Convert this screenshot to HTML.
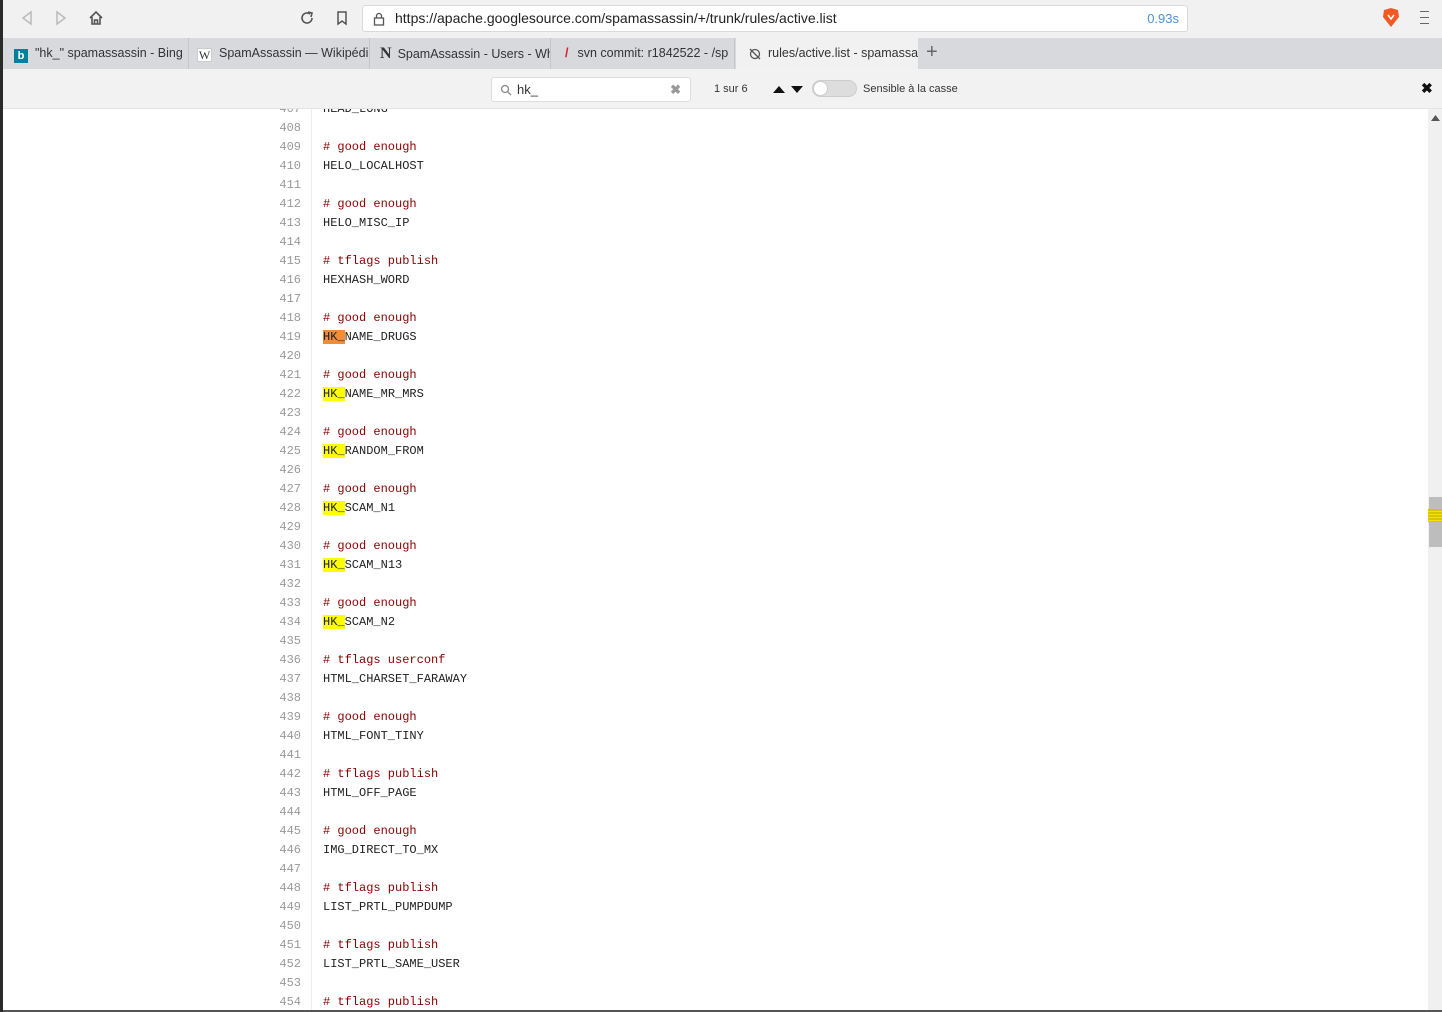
<!DOCTYPE html>
<html><head><meta charset="utf-8">
<style>
*{margin:0;padding:0;box-sizing:border-box}
body{width:1442px;height:1012px;overflow:hidden;background:#fff;font-family:"Liberation Sans",sans-serif;position:relative}
.abs{position:absolute}
#toolbar{left:0;top:0;width:1442px;height:38px;background:#f1f1f1}
#url{left:362px;top:5px;width:826px;height:27px;background:#fff;border:1px solid #d9d9d9;border-radius:3px;font-size:14px;color:#222;line-height:25px;padding-left:32px}
#tabs{left:0;top:38px;width:1442px;height:31px;background:#d7d9dc}
.tab{position:absolute;top:0;height:31px;font-size:12.5px;color:#333;line-height:31px;white-space:nowrap;overflow:hidden;border-right:1px solid #c4c6c9}
#find{left:0;top:69px;width:1442px;height:40px;background:#f2f2f2;border-bottom:1px solid #e4e4e4}
#code{left:4px;top:109px;width:1424px;height:901px;overflow:hidden;background:#fff}
#lines{position:absolute;left:0;top:-9px;width:1424px;font-family:"Liberation Mono",monospace;font-size:12px}
.l{height:19px;line-height:19px;position:relative;white-space:pre;width:1424px}
.n{position:absolute;left:237px;width:60px;text-align:right;color:#999;top:0}
.t{position:absolute;left:319px;color:#222}
.c{color:#880000}
.y{background:#ffff00}
.o{background:#f28c38}
#gutter{left:311px;top:109px;width:1px;height:901px;background:#eee}
#sb{left:1428px;top:109px;width:14px;height:901px;background:#f0f0f0}
</style></head><body>
<div class="abs" style="left:0;top:0;width:3px;height:1012px;background:#2a2a2a;z-index:5"></div>
<div id="toolbar" class="abs">
<svg class="abs" style="left:20px;top:10px" width="14" height="16"><path d="M11 2 L3 8 L11 14 Z" fill="none" stroke="#bbb" stroke-width="1.5"/></svg>
<svg class="abs" style="left:54px;top:10px" width="14" height="16"><path d="M3 2 L11 8 L3 14 Z" fill="none" stroke="#bbb" stroke-width="1.5"/></svg>
<svg class="abs" style="left:88px;top:10px" width="16" height="16"><path d="M2 8 L8 2 L14 8 M4 7 V14 H12 V7 M6.5 14 V10 H9.5 V14" fill="none" stroke="#555" stroke-width="1.6"/></svg>
<svg class="abs" style="left:299px;top:10px" width="16" height="16"><path d="M13 8 A5 5 0 1 1 11 4" fill="none" stroke="#555" stroke-width="1.6"/><path d="M9 2 L13 3 L12 7" fill="none" stroke="#555" stroke-width="1.6"/></svg>
<svg class="abs" style="left:335px;top:10px" width="14" height="16"><path d="M3 2 H11 V14 L7 11 L3 14 Z" fill="none" stroke="#555" stroke-width="1.5"/></svg>
<div id="url" class="abs">https://apache.googlesource.com/spamassassin/+/trunk/rules/active.list<span style="position:absolute;right:8px;color:#4a90d9;font-size:13px">0.93s</span>
<svg style="position:absolute;left:10px;top:6px" width="12" height="14"><rect x="1.5" y="6" width="9" height="7" fill="none" stroke="#555" stroke-width="1.3"/><path d="M3.5 6 V4 A2.5 2.5 0 0 1 8.5 4 V6" fill="none" stroke="#555" stroke-width="1.3"/></svg></div>
<svg class="abs" style="left:1381px;top:7px" width="20" height="22"><path d="M3 3 L10 1 L17 3 L18 10 L10 20 L2 10 Z" fill="#f15a24"/><path d="M7 8 L10 12 L13 8" fill="none" stroke="#fff" stroke-width="1.5"/></svg>
<div class="abs" style="left:1420px;top:11px;width:9px;height:13px;border-top:1.5px solid #666;border-bottom:1.5px solid #666"><div style="margin-top:4.5px;border-top:1.5px solid #666"></div></div>
</div>
<div id="tabs" class="abs">
<div class="tab" style="left:8px;width:181px;padding-left:6px"><span style="display:inline-block;width:14px;height:14px;background:#00809d;color:#fff;font-size:11px;line-height:14px;text-align:center;font-weight:bold;vertical-align:-2px;margin-right:7px">b</span>"hk_" spamassassin - Bing</div>
<div class="tab" style="left:189px;width:181px;padding-left:8px"><span style="display:inline-block;width:15px;height:14px;background:#fff;border:1px solid #ccc;font-family:'Liberation Serif',serif;font-size:12px;line-height:12px;text-align:center;vertical-align:-2px;margin-right:7px">W</span>SpamAssassin — Wikipédia</div>
<div class="tab" style="left:370px;width:181px;padding-left:10px"><span style="font-family:'Liberation Serif',serif;font-weight:bold;font-size:16px;margin-right:6px">N</span>SpamAssassin - Users - Wh</div>
<div class="tab" style="left:551px;width:184px;padding-left:14px"><span style="color:#d0202a;font-weight:bold;margin-right:9px">/</span>svn commit: r1842522 - /sp</div>
<div class="tab" style="left:736px;width:182px;background:#f1f1f1;padding-left:32px;height:31px;border:none">rules/active.list - spamassa
<svg style="position:absolute;left:12px;top:9px" width="14" height="14"><circle cx="7" cy="7" r="4.5" fill="none" stroke="#555" stroke-width="1.3"/><path d="M2 2 L12 12" stroke="#555" stroke-width="1.3"/></svg></div>
<div class="abs" style="left:926px;top:3px;font-size:20px;color:#666">+</div>
</div>
<div id="find" class="abs">
<div class="abs" style="left:491px;top:8px;width:200px;height:25px;background:#fff;border:1px solid #ddd;border-radius:3px;font-size:13px;line-height:23px;padding-left:25px;color:#333">hk_
<svg style="position:absolute;left:8px;top:6px" width="12" height="12"><circle cx="5" cy="5" r="3.5" fill="none" stroke="#888" stroke-width="1.3"/><path d="M7.5 7.5 L11 11" stroke="#888" stroke-width="1.3"/></svg>
<span style="position:absolute;right:9px;top:0;color:#999;font-weight:bold">✖</span></div>
<div class="abs" style="left:714px;top:14px;font-size:11px;color:#333">1 sur 6</div>
<svg class="abs" style="left:772px;top:15px" width="34" height="10"><path d="M1 9 L7 2 L13 9 Z M19 2 L31 2 L25 9 Z" fill="#111"/></svg>
<div class="abs" style="left:812px;top:11px;width:45px;height:17px;background:#ddd;border:1px solid #ccc;border-radius:9px"><div style="width:15px;height:15px;background:#fff;border-radius:50%;border:1px solid #ccc"></div></div>
<div class="abs" style="left:863px;top:14px;font-size:11px;color:#333">Sensible à la casse</div>
<div class="abs" style="left:1421px;top:11px;font-size:14px;font-weight:bold;color:#111">✖</div>
</div>
<div id="code" class="abs"><div id="lines">
<div class="l"><span class="n">407</span><span class="t">HEAD_LONG</span></div>
<div class="l"><span class="n">408</span></div>
<div class="l"><span class="n">409</span><span class="t c"># good enough</span></div>
<div class="l"><span class="n">410</span><span class="t">HELO_LOCALHOST</span></div>
<div class="l"><span class="n">411</span></div>
<div class="l"><span class="n">412</span><span class="t c"># good enough</span></div>
<div class="l"><span class="n">413</span><span class="t">HELO_MISC_IP</span></div>
<div class="l"><span class="n">414</span></div>
<div class="l"><span class="n">415</span><span class="t c"># tflags publish</span></div>
<div class="l"><span class="n">416</span><span class="t">HEXHASH_WORD</span></div>
<div class="l"><span class="n">417</span></div>
<div class="l"><span class="n">418</span><span class="t c"># good enough</span></div>
<div class="l"><span class="n">419</span><span class="t"><span class="o">HK_</span>NAME_DRUGS</span></div>
<div class="l"><span class="n">420</span></div>
<div class="l"><span class="n">421</span><span class="t c"># good enough</span></div>
<div class="l"><span class="n">422</span><span class="t"><span class="y">HK_</span>NAME_MR_MRS</span></div>
<div class="l"><span class="n">423</span></div>
<div class="l"><span class="n">424</span><span class="t c"># good enough</span></div>
<div class="l"><span class="n">425</span><span class="t"><span class="y">HK_</span>RANDOM_FROM</span></div>
<div class="l"><span class="n">426</span></div>
<div class="l"><span class="n">427</span><span class="t c"># good enough</span></div>
<div class="l"><span class="n">428</span><span class="t"><span class="y">HK_</span>SCAM_N1</span></div>
<div class="l"><span class="n">429</span></div>
<div class="l"><span class="n">430</span><span class="t c"># good enough</span></div>
<div class="l"><span class="n">431</span><span class="t"><span class="y">HK_</span>SCAM_N13</span></div>
<div class="l"><span class="n">432</span></div>
<div class="l"><span class="n">433</span><span class="t c"># good enough</span></div>
<div class="l"><span class="n">434</span><span class="t"><span class="y">HK_</span>SCAM_N2</span></div>
<div class="l"><span class="n">435</span></div>
<div class="l"><span class="n">436</span><span class="t c"># tflags userconf</span></div>
<div class="l"><span class="n">437</span><span class="t">HTML_CHARSET_FARAWAY</span></div>
<div class="l"><span class="n">438</span></div>
<div class="l"><span class="n">439</span><span class="t c"># good enough</span></div>
<div class="l"><span class="n">440</span><span class="t">HTML_FONT_TINY</span></div>
<div class="l"><span class="n">441</span></div>
<div class="l"><span class="n">442</span><span class="t c"># tflags publish</span></div>
<div class="l"><span class="n">443</span><span class="t">HTML_OFF_PAGE</span></div>
<div class="l"><span class="n">444</span></div>
<div class="l"><span class="n">445</span><span class="t c"># good enough</span></div>
<div class="l"><span class="n">446</span><span class="t">IMG_DIRECT_TO_MX</span></div>
<div class="l"><span class="n">447</span></div>
<div class="l"><span class="n">448</span><span class="t c"># tflags publish</span></div>
<div class="l"><span class="n">449</span><span class="t">LIST_PRTL_PUMPDUMP</span></div>
<div class="l"><span class="n">450</span></div>
<div class="l"><span class="n">451</span><span class="t c"># tflags publish</span></div>
<div class="l"><span class="n">452</span><span class="t">LIST_PRTL_SAME_USER</span></div>
<div class="l"><span class="n">453</span></div>
<div class="l"><span class="n">454</span><span class="t c"># tflags publish</span></div>
</div></div>
<div id="gutter" class="abs"></div>
<div id="sb" class="abs">
<svg style="position:absolute;left:3px;top:6px" width="9" height="6"><path d="M0 6 L4.5 0 L9 6 Z" fill="#555"/></svg>
<div style="position:absolute;left:1px;top:388px;width:13px;height:50px;background:#bdbdbd"></div>
<div style="position:absolute;left:0;top:400px;width:14px;height:13px;background:repeating-linear-gradient(#d9c400 0 2px,#f2e600 2px 3px)"></div>
</div>
<div class="abs" style="left:0;top:1010px;width:1442px;height:2px;background:#555"></div>
</body></html>
